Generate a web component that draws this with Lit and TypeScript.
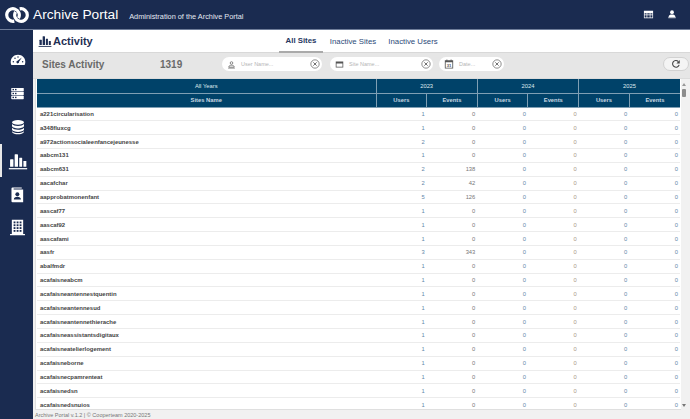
import { LitElement, css, html, svg } from "lit";
import { customElement } from "lit/decorators.js";

const rows: [string, number, number][] = [
  ["a221circularisation", 1, 0],
  ["a348fluxcg", 1, 0],
  ["a972actionsocialeenfancejeunesse", 2, 0],
  ["aabcm131", 1, 0],
  ["aabcm631", 2, 138],
  ["aacafchar", 2, 42],
  ["aapprobatmonenfant", 5, 126],
  ["aascaf77", 1, 0],
  ["aascaf92", 1, 0],
  ["aascafami", 1, 0],
  ["aasfr", 3, 343],
  ["abalfmdr", 1, 0],
  ["acafaisneabcm", 1, 0],
  ["acafaisneantennestquentin", 1, 0],
  ["acafaisneantennesud", 1, 0],
  ["acafaisneantennethierache", 1, 0],
  ["acafaisneassistantsdigitaux", 1, 0],
  ["acafaisneatelierlogement", 1, 0],
  ["acafaisneborne", 1, 0],
  ["acafaisnecpamrenteat", 1, 0],
  ["acafaisnedsn", 1, 0],
  ["acafaisnedsnuios", 1, 0],
];

const icon = (size: number, body: unknown, vb = 24) =>
  html`<svg width=${size} height=${size} viewBox="0 0 ${vb} ${vb}">${body}</svg>`;

const logo = html`<svg width="24" height="18" viewBox="0 0 24 18" fill="none" stroke="#fff" stroke-width="3.2">
  <path d="M9.31 15.16A6.3 6.3 0 1 1 13.46 12.15" />
  <path d="M14.69 2.84A6.3 6.3 0 1 1 10.54 5.85" />
</svg>`;

const gauge = svg`<path fill="#fff" d="M12 4C5.4 4 1 9.3 1 15c0 1.7.4 3.2 1 4.5h20c.6-1.300 1-2.800 1-4.500C23 9.300 18.600 4 12 4z"/>
  <g fill="#1a2b50"><circle cx="5" cy="14.5" r="1.1"/><circle cx="7.5" cy="9.5" r="1.1"/><circle cx="12" cy="7.5" r="1.1"/><circle cx="19" cy="14.5" r="1.1"/><path d="M17.800 8.300l-4.300 6.200a2 2 0 1 1-2.200-1.400z"/></g>`;

const servers = svg`<g fill="#fff"><rect x="2" y="3" width="20" height="5.4" rx="1"/><rect x="2" y="9.300" width="20" height="5.4" rx="1"/><rect x="2" y="15.600" width="20" height="5.4" rx="1"/></g>
  <g fill="#1a2b50">${[4.6, 10.9, 17.2].flatMap((y) => [
    svg`<rect x="4" y=${y} width="2.4" height="2.2"/>`,
    svg`<rect x="8" y=${y} width="2.4" height="2.2"/>`,
  ])}</g>`;

const database = svg`<g fill="#fff"><ellipse cx="12" cy="5" rx="9" ry="3.5"/><path d="M3 7.500c1.500 2 5 3 9 3s7.500-1 9-3V11c-1 2-5 3.200-9 3.200S4 13 3 11z"/><path d="M3 13c1.500 2 5 3 9 3s7.500-1 9-3v3.200c-1 2-5 3.200-9 3.200S4 18.200 3 16.200z"/><path d="M3 18.300c1.500 1.700 5 2.700 9 2.700s7.500-1 9-2.700v1.200c-1 2-5 3.500-9 3.500s-8-1.500-9-3.500z"/></g>`;

const bars = (c: string) => svg`<g fill=${c}><rect x="2.5" y="10" width="4" height="9" rx=".5"/><rect x="8" y="4" width="4" height="15" rx=".5"/><rect x="13.5" y="8" width="3.5" height="11" rx=".5"/><rect x="18.5" y="12" width="3.5" height="7" rx=".5"/><rect x="1" y="20.5" width="22" height="1.5"/></g>`;

const contact = svg`<path fill="#fff" d="M5 2h13v1.500H6.500V5H20v18H5a1.500 1.500 0 0 1-1.500-1.500V3.500A1.500 1.500 0 0 1 5 2z"/>
  <g fill="#1a2b50"><circle cx="11.8" cy="11.5" r="2.8"/><path d="M6.800 19c0-2.800 2.200-4 5-4s5 1.200 5 4z"/></g>`;

const building = svg`<path fill="#fff" d="M4 1h16v20h2.500v2h-21v-2H4z"/>
  <g fill="#1a2b50">${[3.5, 7.5, 11.5, 15.5].flatMap((y) =>
    [6.5, 10.8, 15].map((x) => svg`<rect x=${x} y=${y} width="2.6" height="2.6"/>`)
  )}</g>`;

const grid = svg`<path fill="#fff" d="M2 4h20v16H2zm1.500 5v3h4.300V9zm5.800 0v3h5.400V9zm6.900 0v3h4.300V9zM3.500 13.500v5h4.300v-5zm5.800 0v5h5.400v-5zm6.900 0v5h4.300v-5z"/>`;

const person = svg`<g fill="#fff"><circle cx="12" cy="7.5" r="4.5"/><path d="M4 18c0-3.500 4-5 8-5s8 1.500 8 5v1H4z"/><rect x="3" y="20" width="18" height="2"/></g>`;

const personOutline = svg`<g fill="none" stroke="#666" stroke-width="2"><circle cx="12" cy="8" r="3.5"/><path d="M5 19v-1.500c0-2.200 3.500-3.500 7-3.500s7 1.300 7 3.500V19z"/></g><rect x="3" y="20.5" width="18" height="2" fill="#666"/>`;

const windowIcon = svg`<path fill="#555" d="M2 4h20v16H2zm2 5v9h16V9z"/>`;

const calendar = svg`<path fill="#555" d="M6 1h2v2h8V1h2v2h4v20H2V3h4zM4 8v13h16V8z"/>
  <text x="12" y="19" text-anchor="middle" font-size="10" font-weight="700" fill="#555" font-family="Liberation Sans">31</text>`;

const clear = svg`<circle cx="12" cy="12" r="10" fill="none" stroke="#666" stroke-width="1.8"/><path d="M8 8l8 8M16 8l-8 8" stroke="#555" stroke-width="2"/>`;

const refresh = svg`<path fill="none" stroke="#444" stroke-width="2.6" d="M19.500 14a8 8 0 1 1-2-8"/><path fill="#444" d="M21 2.500v8h-8z"/>`;

@customElement("app-root")
export class AppRoot extends LitElement {
  static styles = css`
    :host {
      display: flex;
      flex-direction: column;
      width: 690px;
      height: 419px;
      overflow: hidden;
      background: #1a2b50;
      font-family: "Liberation Sans", Arial, sans-serif;
    }

    .top {
      display: flex;
      align-items: center;
      height: 29px;
      flex: none;
      padding: 0 13px 0 5px;
      color: #fff;
      border-bottom: 1px solid #6f7d99;
    }
    .brand { font-size: 13.7px; margin-left: 4px; white-space: nowrap; }
    .subtitle { font-size: 7.35px; margin-left: 11px; margin-top: 3px; color: #e4e8f0; flex: 1; }
    .top-icons { display: flex; gap: 13px; align-items: center; margin-bottom: 1px; }
    .top-icons svg { display: block; }

    .body { display: flex; flex: 1; min-height: 0; }

    nav {
      width: 33px;
      flex: none;
      display: flex;
      flex-direction: column;
      padding-top: 13px;
    }
    nav div {
      height: 33.6px;
      display: flex;
      align-items: center;
      justify-content: center;
      border-left: 2px solid transparent;
    }
    nav div.active { border-left-color: #e8e8e8; }

    main {
      flex: 1;
      min-width: 0;
      display: flex;
      flex-direction: column;
      background: #f1f1f1;
    }

    .tabs {
      display: flex;
      align-items: center;
      height: 22px;
      flex: none;
      background: #fff;
      border-bottom: 1px solid #d8d8d8;
    }
    .page-title {
      display: flex;
      align-items: center;
      gap: 1px;
      width: 246px;
      padding-left: 5px;
      box-sizing: border-box;
      font-size: 11px;
      font-weight: 700;
      color: #1f2f55;
    }
    .tab {
      font-size: 7.8px;
      color: #2b4a78;
      height: 100%;
      width: 44px;
      white-space: nowrap;
      display: flex;
      align-items: center;
      justify-content: center;
      box-sizing: border-box;
      margin-right: 16px;
    }
    .tab.active {
      font-weight: 700;
      color: #26375f;
      border-bottom: 2px solid #aaa;
      margin-bottom: -1px;
      height: 23px;
      margin-right: 8px;
    }

    .filters {
      display: flex;
      align-items: center;
      height: 26px;
      flex: none;
      box-sizing: border-box;
      padding-bottom: 3px;
      background: #e6e6e6;
      border-bottom: 1px solid #dcdcdc;
    }
    .filters h2 {
      margin: 0;
      width: 127px;
      padding-left: 9px;
      box-sizing: border-box;
      font-size: 10px;
      color: #6a6a6a;
    }
    .count { width: 62px; font-size: 10px; font-weight: 700; color: #6a6a6a; }
    .pill {
      display: flex;
      align-items: center;
      height: 14px;
      background: #fff;
      border-radius: 7px;
      box-sizing: border-box;
      padding: 0 2px 0 5px;
      margin-right: 6px;
      font-size: 5.5px;
      color: #b5b5b5;
    }
    .pill span { flex: 1; margin-left: 5px; }
    .pill svg { display: block; flex: none; }
    .pill.user { width: 100px; margin-right: 8px; }
    .pill.site { width: 103px; }
    .pill.date { width: 65px; }
    .refresh {
      margin-left: auto;
      margin-right: 1px;
      width: 26px;
      height: 14px;
      border: 1px solid #d2d2d2;
      border-radius: 7px;
      background: #f4f4f4;
      box-sizing: border-box;
      display: flex;
      align-items: center;
      justify-content: center;
    }

    .content {
      flex: 1;
      min-height: 0;
      display: flex;
      margin-left: 2px;
    }
    .sheet {
      flex: 1;
      min-width: 0;
      background: #fff;
      border: 1px solid #dfdfdf;
      border-top: none;
      border-right: none;
      padding: 0 1px;
      overflow: hidden;
    }
    table {
      width: 643px;
      table-layout: fixed;
      border-collapse: collapse;
      font-size: 5.8px;
    }
    th {
      background: #004269;
      color: #dfe8ee;
      font-weight: 400;
      height: 14px;
      padding: 0;
      text-align: center;
      border: 1px solid #7f9fb4;
      border-top: none;
      border-left: none;
      box-sizing: border-box;
    }
    thead tr:nth-child(2) th { font-weight: 700; color: #c9d8e2; }
    th:last-child { border-right: none; }
    td {
      height: 13.85px;
      box-sizing: border-box;
      padding: 0 2px 0 0;
      text-align: right;
      color: #777;
      border-bottom: 1px solid #ececec;
    }
    td.name {
      text-align: left;
      padding-left: 3px;
      font-weight: 700;
      font-size: 5.95px;
      color: #444;
    }
    td.u { color: #6487a8; }
    td.n { color: #a99a86; }

    .scroll {
      width: 9px;
      flex: none;
      position: relative;
      background: #f1f1f1;
    }
    .scroll .thumb {
      position: absolute;
      left: 1px;
      top: 10px;
      width: 4px;
      height: 8px;
      border-radius: 1px;
      background: #8c8c8c;
    }
    .scroll .up, .scroll .down {
      position: absolute;
      left: 1px;
      width: 0;
      height: 0;
      border-left: 2px solid transparent;
      border-right: 2px solid transparent;
    }
    .scroll .up { top: 4px; border-bottom: 3px solid #999; }
    .scroll .down { bottom: 3px; border-top: 3px solid #777; }

    footer {
      height: 9px;
      flex: none;
      font-size: 5.5px;
      line-height: 10px;
      padding-left: 2px;
      color: #777;
      background: #f1f1f1;
    }
  `;

  render() {
    return html`
      <header class="top">
        ${logo}
        <span class="brand">Archive Portal</span>
        <span class="subtitle">Administration of the Archive Portal</span>
        <div class="top-icons">${icon(11, grid)}${icon(10, person)}</div>
      </header>
      <div class="body">
        <nav>
          <div>${icon(16, gauge)}</div>
          <div>${icon(15, servers)}</div>
          <div>${icon(16, database)}</div>
          <div class="active">${icon(20, bars("#fff"))}</div>
          <div>${icon(17, contact)}</div>
          <div>${icon(17, building)}</div>
        </nav>
        <main>
          <div class="tabs">
            <div class="page-title">${icon(14, bars("#1f2f55"))}Activity</div>
            <div class="tab active">All Sites</div>
            <div class="tab">Inactive Sites</div>
            <div class="tab">Inactive Users</div>
          </div>
          <div class="filters">
            <h2>Sites Activity</h2>
            <div class="count">1319</div>
            <div class="pill user">${icon(9, personOutline)}<span>User Name...</span>${icon(10, clear)}</div>
            <div class="pill site">${icon(9, windowIcon)}<span>Site Name...</span>${icon(10, clear)}</div>
            <div class="pill date">${icon(10, calendar)}<span>Date...</span>${icon(10, clear)}</div>
            <div class="refresh">${icon(10, refresh)}</div>
          </div>
          <div class="content">
            <div class="sheet">
              <table>
                <colgroup>
                  <col style="width:339px" /><col /><col /><col /><col /><col /><col />
                </colgroup>
                <thead>
                  <tr>
                    <th>All Years</th>
                    <th colspan="2">2023</th>
                    <th colspan="2">2024</th>
                    <th colspan="2">2025</th>
                  </tr>
                  <tr>
                    <th>Sites Name</th>
                    <th>Users</th><th>Events</th>
                    <th>Users</th><th>Events</th>
                    <th>Users</th><th>Events</th>
                  </tr>
                </thead>
                <tbody>
                  ${rows.map(
                    ([name, users, events]) => html`<tr>
                      <td class="name">${name}</td>
                      <td class="u">${users}</td>
                      <td>${events}</td>
                      <td class="u">0</td>
                      <td class="n">0</td>
                      <td class="u">0</td>
                      <td class="u">0</td>
                    </tr>`
                  )}
                </tbody>
              </table>
            </div>
            <div class="scroll"><i class="up"></i><i class="thumb"></i><i class="down"></i></div>
          </div>
          <footer>Archive Portal v.1.2 | © Cooperteam 2020-2025</footer>
        </main>
      </div>
    `;
  }
}
